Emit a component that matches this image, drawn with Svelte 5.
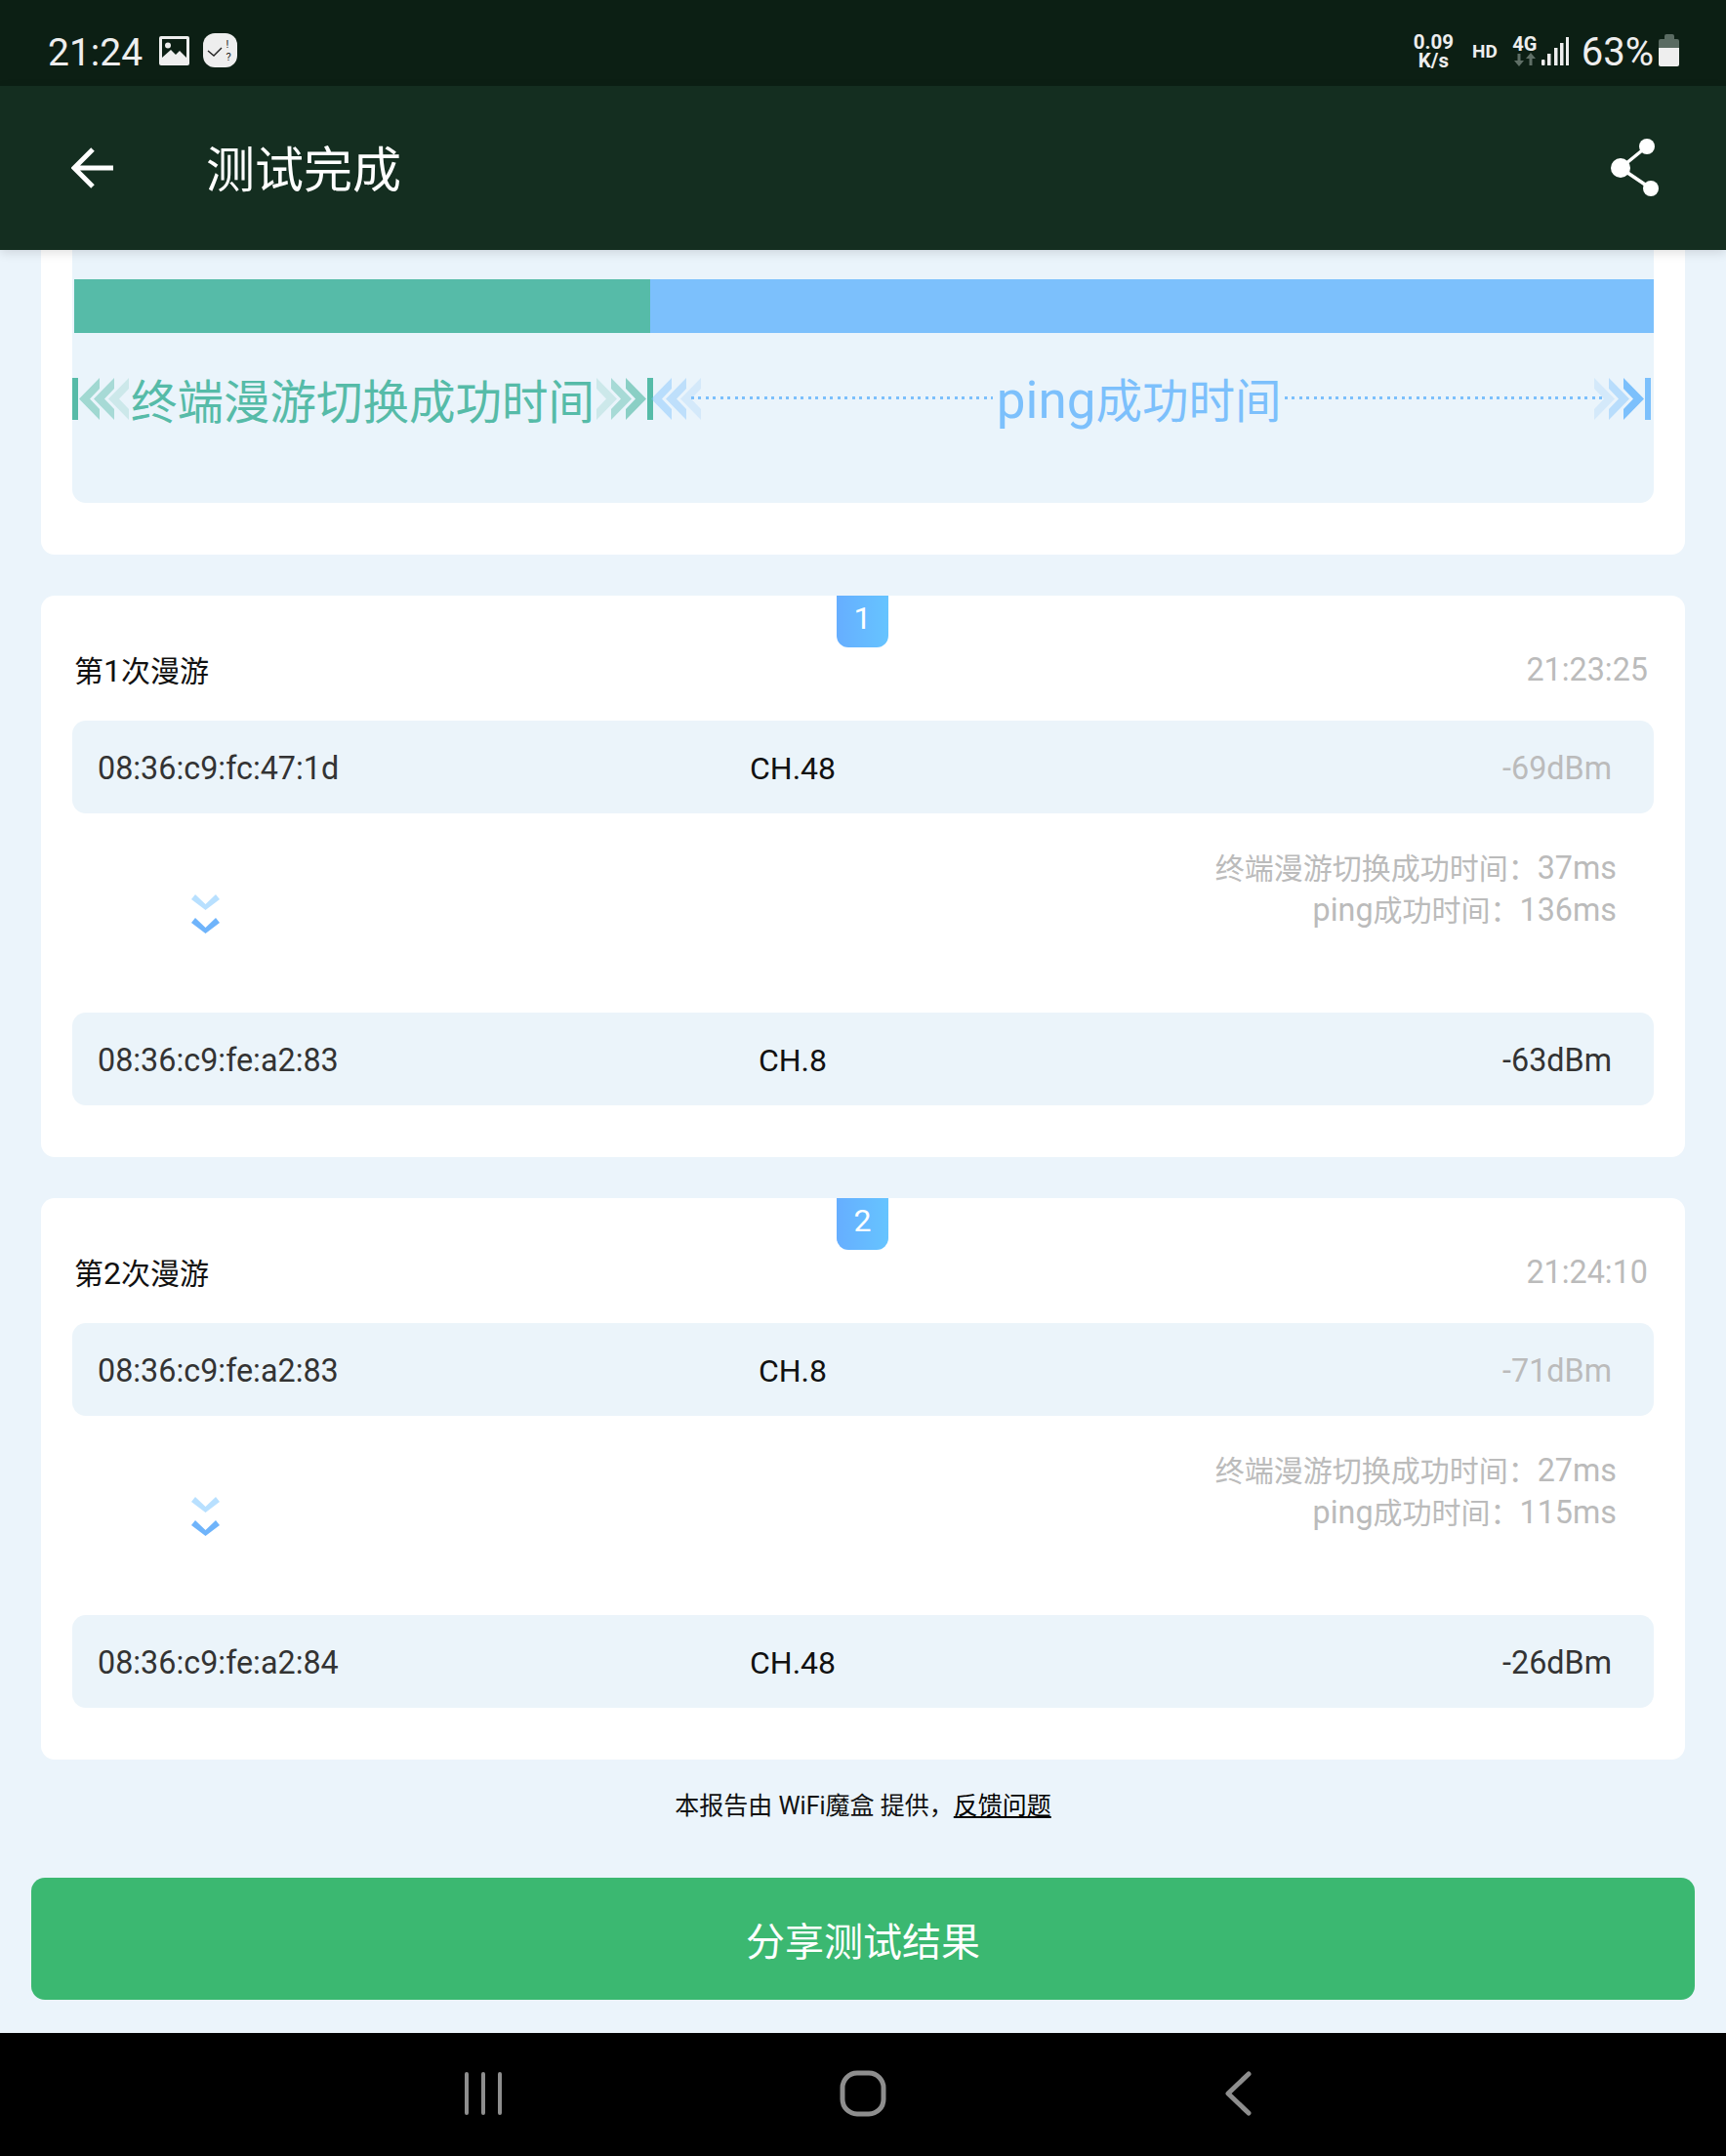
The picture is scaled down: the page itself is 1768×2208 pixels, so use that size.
<script>
    const roams = [
        {
            n: 1, time: '21:23:25',
            from: { mac: '08:36:c9:fc:47:1d', ch: 'CH.48', rssi: '-69dBm' },
            to: { mac: '08:36:c9:fe:a2:83', ch: 'CH.8', rssi: '-63dBm' },
            handover: 37, ping: 136
        },
        {
            n: 2, time: '21:24:10',
            from: { mac: '08:36:c9:fe:a2:83', ch: 'CH.8', rssi: '-71dBm' },
            to: { mac: '08:36:c9:fe:a2:84', ch: 'CH.48', rssi: '-26dBm' },
            handover: 27, ping: 115
        }
    ];
    const chev = '0,0 21,21.5 0,43 0,32 10,21.5 0,11';
    const vee = '0,7 4,2 14.5,12 25,2 29,7 14.5,18';
</script>

{#snippet arrows(flip, color, ops, bar)}
    <svg class="arrows" class:flip width="58" height="43" viewBox="0 0 58 43" style="--c: {color}">
        <polygon points={chev} opacity={ops[0]} />
        <polygon points={chev} transform="translate(15 0)" opacity={ops[1]} />
        <polygon points={chev} transform="translate(30 0)" opacity={ops[2]} />
        {#if bar}<rect x="52" y="0" width="6" height="43" />{/if}
    </svg>
{/snippet}

{#snippet ap(item, dim)}
    <div class="ap">
        <span class="mac">{item.mac}</span>
        <span class="ch">{item.ch}</span>
        <span class="rssi" class:dim>{item.rssi}</span>
    </div>
{/snippet}

<div class="page">
    <div class="status">
        <span class="clock">21:24</span>
        <svg class="ic-image" width="31" height="30" viewBox="0 0 31 30">
            <rect width="31" height="30" rx="2" fill="#eee" />
            <rect x="3" y="3" width="25" height="22" fill="#0c1f14" />
            <circle cx="9" cy="9.5" r="3" fill="#eee" />
            <path d="M3 25 L3 22 L12 14 L17 19 L21 15 L28 22 L28 25 Z" fill="#eee" />
        </svg>
        <svg class="ic-task" width="35" height="35" viewBox="0 0 35 35">
            <rect width="35" height="35" rx="12" fill="#eee" />
            <path d="M5 18 L11 23 L19 15" fill="none" stroke="#222" stroke-width="1.4" />
            <text x="25" y="15" class="tiny">!</text>
            <text x="26" y="28" class="tiny">?</text>
        </svg>
        <span class="grow"></span>
        <div class="speed"><span>0.09</span><span>K/s</span></div>
        <span class="hd">HD</span>
        <div class="net">
            <span>4G</span>
            <svg width="24" height="14" viewBox="0 0 24 14">
                <path d="M6 14 L1 8 H4.5 V1 H7.5 V8 H11 Z" fill="#5f6f66" />
                <path d="M18 0 L23 6 H19.5 V13 H16.5 V6 H13 Z" fill="#5f6f66" />
            </svg>
        </div>
        <svg class="ic-signal" width="29" height="29" viewBox="0 0 29 29">
            <rect x="0" y="23" width="3.5" height="6" rx="1" fill="#eee" />
            <rect x="6" y="17" width="3.5" height="12" fill="#eee" />
            <rect x="13" y="11" width="3.5" height="18" fill="#eee" />
            <rect x="19" y="6" width="3.5" height="23" fill="#eee" />
            <rect x="25" y="0" width="3" height="29" fill="#eee" />
        </svg>
        <span class="pct">63%</span>
        <svg class="ic-batt" width="21" height="33" viewBox="0 0 21 33">
            <path d="M6 2 Q6 0 8 0 H14 Q16 0 16 2 V5 H19 Q21 5 21 7 V14 H0 V7 Q0 5 2 5 H6 Z" fill="#5a6b62" />
            <path d="M0 14 H21 V31 Q21 33 19 33 H2 Q0 33 0 31 Z" fill="#eee" />
        </svg>
    </div>

    <header>
        <svg class="back" width="44" height="44" viewBox="0 0 44 44">
            <path d="M22 3 L3 22 L22 41 M3 22 H43" fill="none" stroke="#fff" stroke-width="5" />
        </svg>
        <h1>测试完成</h1>
        <svg class="share" width="51" height="60" viewBox="0 0 51 60">
            <path d="M37 8 L10 30 L41 51" fill="none" stroke="#fff" stroke-width="3.5" />
            <circle cx="37" cy="8" r="8" fill="#fff" />
            <circle cx="10" cy="30" r="10" fill="#fff" />
            <circle cx="41" cy="51" r="8" fill="#fff" />
        </svg>
    </header>

    <main>
        <section class="card summary">
            <div class="panel">
                <div class="bar"><div class="bar-a"></div><div class="bar-b"></div></div>
                <div class="legend">
                    <div class="seg-a">
                        {@render arrows(true, '#56bba8', [0.2, 0.45, 0.5], true)}
                        <span class="lbl-a">终端漫游切换成功时间</span>
                        {@render arrows(false, '#56bba8', [0.2, 0.45, 0.65], true)}
                    </div>
                    <div class="seg-b">
                        {@render arrows(true, '#7cc0fc', [0.2, 0.4, 0.45], false)}
                        <span class="dots dots-l"></span>
                        <span class="lbl-b"><span class="lat">ping</span>成功时间</span>
                        <span class="dots dots-r"></span>
                        {@render arrows(false, '#7cc0fc', [0.2, 0.45, 1], true)}
                    </div>
                </div>
            </div>
        </section>

        {#each roams as r}
            <section class="card roam">
                <div class="badge">{r.n}</div>
                <div class="roam-head">
                    <span class="title"><span class="cjk">第</span>{r.n}<span class="cjk">次漫游</span></span>
                    <span class="time">{r.time}</span>
                </div>
                {@render ap(r.from, true)}
                <div class="mid">
                    <svg class="down" width="29" height="42" viewBox="0 0 29 42">
                        <polygon points={vee} fill="#b8e0ff" />
                        <polygon points={vee} transform="translate(0 24)" fill="#6fb4fb" />
                    </svg>
                    <div class="times">
                        <div><span class="cjk">终端漫游切换成功时间：</span>{r.handover}ms</div>
                        <div>ping<span class="cjk">成功时间：</span>{r.ping}ms</div>
                    </div>
                </div>
                {@render ap(r.to, false)}
            </section>
        {/each}

        <p class="credit">本报告由 WiFi魔盒 提供，<a href="#feedback">反馈问题</a></p>
        <button class="cta">分享测试结果</button>
    </main>

    <nav>
        <svg width="40" height="44" viewBox="0 0 40 44">
            <path d="M3 2 V42 M20 2 V42 M37 2 V42" fill="none" stroke="#8e8e8e" stroke-width="4" stroke-linecap="round" />
        </svg>
        <svg width="48" height="48" viewBox="0 0 48 48">
            <rect x="3" y="3" width="42" height="42" rx="15" fill="none" stroke="#8e8e8e" stroke-width="5" />
        </svg>
        <svg width="30" height="46" viewBox="0 0 30 46">
            <path d="M26 3 L5 23 L26 43" fill="none" stroke="#8e8e8e" stroke-width="5" stroke-linecap="round" stroke-linejoin="round" />
        </svg>
    </nav>
</div>

<style>
    :global(body) {
        margin: 0;
        background: #ebf4fb;
        font-family: Roboto, "Noto Sans CJK SC", sans-serif;
    }

    .page {
        width: 1768px;
        height: 2208px;
        display: flex;
        flex-direction: column;
        overflow: hidden;
    }

    /* status bar */
    .status {
        height: 88px;
        box-sizing: border-box;
        padding: 18px 48px 0 49px;
        display: flex;
        align-items: center;
        background: #0c1f14;
        color: #eee;
    }
    .clock { font-size: 39px; line-height: 40px; margin: 2px 17px 0 0; }
    .ic-image { margin-top: -2px; }
    .ic-task { margin-left: 14px; margin-top: -3px; }
    .tiny { font: 11px Roboto, sans-serif; fill: #222; text-anchor: middle; }
    .grow { flex: 1; }
    .speed {
        display: flex;
        flex-direction: column;
        align-items: center;
        font-size: 20.5px;
        line-height: 19px;
        font-weight: 700;
        margin-top: -1px;
    }
    .hd { font-size: 19px; font-weight: 700; margin-left: 19px; margin-top: -2px; }
    .net {
        display: flex;
        flex-direction: column;
        align-items: center;
        width: 26px;
        margin-left: 15px;
        margin-top: -2px;
        font-size: 20px;
        line-height: 18px;
        font-weight: 700;
    }
    .net svg { display: block; }
    .ic-signal { margin-left: 4px; margin-top: -1px; }
    .pct { font-size: 40px; line-height: 40px; margin: 2px 0 0 12px; }
    .ic-batt { margin-left: 5px; margin-top: -3px; }

    /* app bar */
    header {
        position: relative;
        z-index: 1;
        height: 168px;
        flex: none;
        display: flex;
        align-items: center;
        padding: 0 67px 0 73px;
        background: #142e20;
        color: #fff;
        box-shadow: 0 3px 10px rgba(0, 0, 0, 0.12);
    }
    h1 {
        flex: 1;
        margin: 5px 0 0 94px;
        font-size: 50px;
        font-weight: 400;
        line-height: 60px;
    }

    main {
        flex: 1;
        min-height: 0;
        overflow: hidden;
    }

    .card {
        position: relative;
        margin: 0 42px 42px;
        padding: 0 32px;
        background: #fff;
        border-radius: 0 0 14px 14px;
    }

    /* summary chart */
    .summary { padding-bottom: 53px; }
    .panel {
        height: 259px;
        box-sizing: border-box;
        padding-top: 30px;
        background: #eaf4fb;
        border-radius: 0 0 14px 14px;
    }
    .bar { display: flex; height: 55px; margin-left: 2px; }
    .bar-a { width: 590px; background: #56bba8; }
    .bar-b { flex: 1; background: #7cc0fc; }

    .legend {
        display: flex;
        margin-top: 46px;
        height: 43px;
        align-items: center;
    }
    .seg-a { display: flex; align-items: center; width: 595px; flex: none; }
    .seg-b { display: flex; align-items: center; flex: 1; min-width: 0; }
    .arrows { flex: none; fill: var(--c); }
    .arrows.flip { transform: scaleX(-1); }
    .lbl-a, .lbl-b {
        font-family: "Noto Sans CJK SC", sans-serif;
        font-size: 47.5px;
        line-height: 43px;
        white-space: nowrap;
        font-weight: 400;
    }
    .lbl-a { color: #56bba8; flex: 1; text-align: center; }
    .lbl-b { color: #7cc0fc; margin: 0 4px; }
    .lat { font-family: Roboto, sans-serif; font-size: 53px; }
    .seg-b .arrows:first-child { margin-left: -9px; }
    .seg-b .arrows:last-child { margin-right: 3px; }
    .dots {
        height: 3px;
        margin-top: -3px;
        min-width: 0;
        background: repeating-linear-gradient(90deg, #7cc0fc 0 3px, transparent 3px 7.5px);
    }
    .dots-l { flex: 311; margin-left: -10px; }
    .dots-r { flex: 332; margin-right: -13px; }

    /* roam cards */
    .roam { border-radius: 14px; height: 575px; box-sizing: border-box; }
    .badge {
        position: absolute;
        top: 0;
        left: 815px;
        width: 53px;
        height: 53px;
        border-radius: 0 0 12px 12px;
        background: linear-gradient(90deg, #66aeff, #66c4ff);
        color: #fff;
        font-size: 32px;
        line-height: 46px;
        text-align: center;
    }
    .roam-head {
        height: 128px;
        box-sizing: border-box;
        padding: 21px 6px 0 2px;
        display: flex;
        justify-content: space-between;
        align-items: center;
    }
    .title { font-size: 32px; color: #111; }
    .time { font-size: 32.3px; color: #bbb; margin-top: 2px; }
    .cjk { font-size: 30px; }

    .ap {
        height: 95px;
        display: grid;
        grid-template-columns: 622px 180px 1fr;
        align-items: center;
        padding: 0 43px 0 26px;
        background: #ebf4fa;
        border-radius: 14px;
        font-size: 32.3px;
    }
    .ap span { margin-top: 2px; }
    .mac { color: #333; }
    .ch { color: #111; text-align: center; font-size: 32px; }
    .rssi { color: #333; text-align: right; }
    .rssi.dim { color: #bbb; }

    .mid {
        height: 204px;
        box-sizing: border-box;
        display: flex;
        justify-content: space-between;
        padding: 0 38px 0 122px;
    }
    .down { align-self: center; }
    .times {
        padding-top: 35px;
        color: #bbb;
        font-size: 32.3px;
        line-height: 43px;
        text-align: right;
    }

    /* footer */
    .credit {
        margin: -42px 0 0;
        height: 121px;
        line-height: 95px;
        text-align: center;
        font-size: 25px;
        color: #111;
    }
    .credit a { color: #000; }
    .cta {
        display: block;
        width: 1704px;
        height: 125px;
        margin: 0 32px;
        padding: 0;
        border: none;
        border-radius: 14px;
        background: #3bb871;
        color: #fff;
        font-family: inherit;
        font-size: 40px;
    }

    nav {
        height: 126px;
        flex: none;
        box-sizing: border-box;
        padding: 0 0 2px 475px;
        display: flex;
        align-items: center;
        gap: 345px;
        background: #000;
    }
</style>
